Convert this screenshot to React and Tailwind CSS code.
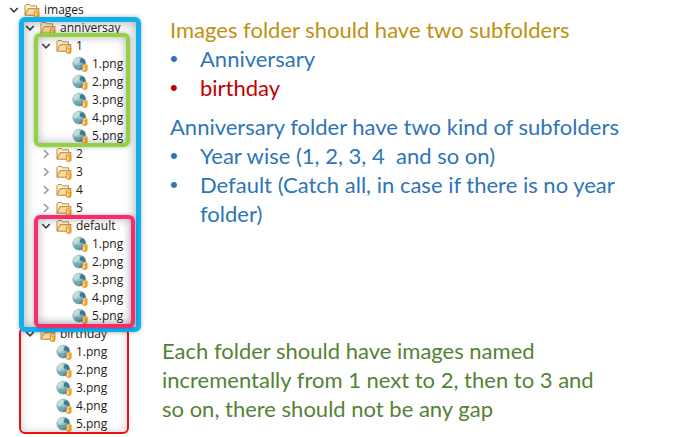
import React from "react";

const files = ["1.png", "2.png", "3.png", "4.png", "5.png"];

function Chevron({ open, name }) {
  return (
    <button
      type="button"
      aria-label={name}
      aria-expanded={open}
      className={"flex h-4 w-3 shrink-0 items-center justify-center " + (open ? "text-[#404040]" : "text-[#a0a0a0]")}
    >
      <svg width="10" height="10" viewBox="0 0 10 10" fill="none" stroke="currentColor" strokeWidth="1.7">
        <path d={open ? "M1.2 3 5 6.8 8.8 3" : "M3 1.2 7 5 3 8.8"} />
      </svg>
    </button>
  );
}

function Cylinder() {
  return (
    <g>
      <path d="M10.3 9.2h4.8v5c0 1.8-4.8 1.8-4.8 0z" fill="#f5a930" stroke="#d08a25" strokeWidth=".7" />
      <path d="M11.8 10.5v4" stroke="#fff0c4" strokeWidth="1.2" />
      <ellipse cx="12.7" cy="9.2" rx="2.4" ry="1" fill="#ffe3a0" stroke="#d08a25" strokeWidth=".7" />
    </g>
  );
}

function FolderIcon() {
  return (
    <svg className="shrink-0" width="16" height="16" viewBox="0 0 16 16" aria-hidden="true">
      <path d="M1 13V3.6L2 2.5h3.6l1 1.3h6v3" fill="#fdf0cf" stroke="#c08a44" strokeWidth="1" />
      <path d="M1 13.2 4 6.7h11.2l-2.8 6.5z" fill="#fbdc9c" stroke="#bd8338" strokeWidth="1" strokeLinejoin="round" />
      <Cylinder />
    </svg>
  );
}

function GlobeIcon() {
  return (
    <svg className="shrink-0" width="16" height="16" viewBox="0 0 16 16" aria-hidden="true">
      <defs>
        <radialGradient id="sea" cx=".3" cy=".25" r=".85">
          <stop offset="0" stopColor="#d3e8f2" />
          <stop offset=".5" stopColor="#7fb5d8" />
          <stop offset="1" stopColor="#2f6da3" />
        </radialGradient>
      </defs>
      <circle cx="7.2" cy="7.6" r="6.5" fill="url(#sea)" stroke="#7fa9bd" strokeWidth=".5" />
      <path d="M1.4 6C2 3.400 4 1.800 6.400 1.500l1.200 1.500-1.800 1.500-.3 1.700-2 1.300-.5 1.500z" fill="#c9dfc6" />
      <path d="m8.600 2.800 2.200-.6c1.600 1 2.600 2.600 2.800 4.200l-1.800 1.600-2.100-1.400-1.500.2-.5-1.700z" fill="#3f7a88" />
      <path d="m3.800 9 3.200.6.900 1.400-1.300 2.500C5.200 13.500 4 12.800 3.300 12z" fill="#74a98f" />
      <Cylinder />
    </svg>
  );
}

function File({ name }) {
  return (
    <li className="flex h-[18px] items-center pl-4">
      <GlobeIcon />
      <span className="ml-1">{name}</span>
    </li>
  );
}

function Folder({ name, open = false, frame, children }) {
  return (
    <li className="relative">
      <div className="flex h-[18px] items-center">
        <Chevron open={open} name={name} />
        <span className="ml-1 flex">
          <FolderIcon />
        </span>
        <span className="ml-1">{name}</span>
      </div>
      {open && <ul className="pl-4">{children}</ul>}
      {frame && <span aria-hidden="true" className={"pointer-events-none absolute " + frame} />}
    </li>
  );
}

function Files() {
  return files.map((f) => <File key={f} name={f} />);
}

function Tree() {
  return (
    <ul className="pt-px pl-2 font-['Open_Sans','Noto_Sans',sans-serif] text-[12px] leading-[18px] text-[#1b1b1b]">
      <Folder name="images" open>
        <Folder
          name="anniversay"
          open
          frame="z-10 -top-0.5 -bottom-[7px] -left-[5px] right-[9px] rounded-md border-[5px] border-[#0fb0ee] shadow-[inset_0_0_12px_rgba(0,0,0,0.35),0_0_4px_rgba(0,0,0,0.3)]"
        >
          <Folder
            name="1"
            open
            frame="z-20 -top-1 -bottom-0.5 -left-1.5 right-5 rounded-md border-4 border-[#92d242] shadow-[inset_0_0_10px_rgba(0,0,0,0.3),0_0_4px_rgba(0,0,0,0.3)]"
          >
            <Files />
          </Folder>
          <Folder name="2" />
          <Folder name="3" />
          <Folder name="4" />
          <Folder name="5" />
          <Folder
            name="default"
            open
            frame="z-20 -top-0.5 -bottom-[3px] -left-1.5 right-[15px] rounded-md border-4 border-[#f72d6b] shadow-[inset_0_0_10px_rgba(0,0,0,0.3),0_0_4px_rgba(0,0,0,0.3)]"
          >
            <Files />
          </Folder>
        </Folder>
        <Folder
          name="birthday"
          open
          frame="top-0.5 -bottom-px -left-[5px] right-[21px] rounded-md border-2 border-[#f00e12] shadow-[inset_0_0_8px_rgba(0,0,0,0.2)]"
        >
          <Files />
        </Folder>
      </Folder>
    </ul>
  );
}

function Bullet({ className = "", children }) {
  return (
    <li className={"flex " + className}>
      <span aria-hidden="true" className="w-[30px] shrink-0 font-['Liberation_Sans',sans-serif]">•</span>
      <span className="whitespace-pre-wrap">{children}</span>
    </li>
  );
}

export default function App() {
  return (
    <div className="flex min-h-screen bg-white">
      <aside className="w-[150px] shrink-0">
        <Tree />
      </aside>
      <main className="min-w-0 flex-1 pt-[15px] pl-3 font-['Lato',sans-serif] text-[22px] leading-[29px]">
        <section className="pl-2">
          <h2 className="text-[#c0910f]">Images folder should have two subfolders</h2>
          <ul>
            <Bullet className="text-[#2e75b6]">Anniversary</Bullet>
            <Bullet className="text-[#c00000]">birthday</Bullet>
          </ul>
        </section>
        <section className="mt-2.5 max-w-[475px] pl-2 text-[#2e75b6]">
          <h2>Anniversary folder have two kind of subfolders</h2>
          <ul>
            <Bullet>Year wise (1, 2, 3, 4  and so on)</Bullet>
            <Bullet>Default (Catch all, in case if there is no year folder)</Bullet>
          </ul>
        </section>
        <p className="mt-[108px] max-w-[450px] text-[#548235]">
          Each folder should have images named incrementally from 1 next to 2, then to 3 and so on, there should not be any gap
        </p>
      </main>
    </div>
  );
}
